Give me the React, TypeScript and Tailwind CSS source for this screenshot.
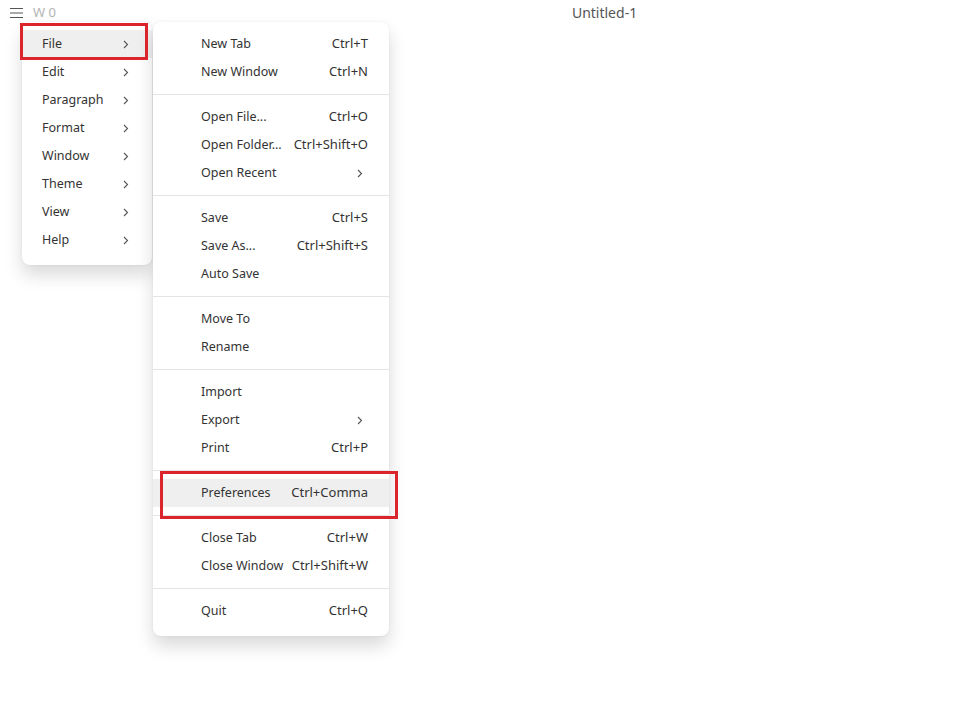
import React from 'react'

type Item = { label: string; shortcut?: string; sub?: boolean; active?: boolean }

const topMenu = ['File', 'Edit', 'Paragraph', 'Format', 'Window', 'Theme', 'View', 'Help']

const fileGroups: Item[][] = [
  [{ label: 'New Tab', shortcut: 'Ctrl+T' }, { label: 'New Window', shortcut: 'Ctrl+N' }],
  [
    { label: 'Open File...', shortcut: 'Ctrl+O' },
    { label: 'Open Folder...', shortcut: 'Ctrl+Shift+O' },
    { label: 'Open Recent', sub: true },
  ],
  [
    { label: 'Save', shortcut: 'Ctrl+S' },
    { label: 'Save As...', shortcut: 'Ctrl+Shift+S' },
    { label: 'Auto Save' },
  ],
  [{ label: 'Move To' }, { label: 'Rename' }],
  [{ label: 'Import' }, { label: 'Export', sub: true }, { label: 'Print', shortcut: 'Ctrl+P' }],
  [{ label: 'Preferences', shortcut: 'Ctrl+Comma', active: true }],
  [{ label: 'Close Tab', shortcut: 'Ctrl+W' }, { label: 'Close Window', shortcut: 'Ctrl+Shift+W' }],
  [{ label: 'Quit', shortcut: 'Ctrl+Q' }],
]

function Chevron() {
  return (
    <svg width="6" height="9" viewBox="0 0 6 9" fill="none" className="text-[#555]">
      <path d="M1 1l3.5 3.5L1 8" stroke="currentColor" strokeWidth="1.1" />
    </svg>
  )
}

export default function App() {
  return (
    <div
      className="relative w-[953px] h-[709px] bg-white overflow-hidden text-[12.5px] text-[#333]"
      style={{ fontFamily: '"Noto Sans", "Open Sans", sans-serif' }}
    >
      {/* title bar */}
      <div className="flex items-center h-[25px] pl-[10px]">
        <svg width="13" height="12" viewBox="0 0 13 12" className="text-[#555]">
          <path d="M0 1.5h13M0 6h13M0 10.5h13" stroke="currentColor" strokeWidth="1.1" />
        </svg>
        <span className="ml-[10px] text-[#b4b4b4] text-[13px]">W 0</span>
        <span className="ml-[516px] text-[14px] text-[#555]">Untitled-1</span>
      </div>

      {/* main menu */}
      <div className="absolute left-[22px] top-[22px] w-[130px] bg-white rounded-[8px] pt-2 pb-[11px] shadow-[0_10px_18px_rgba(0,0,0,0.15),0_0_3px_rgba(0,0,0,0.06)]">
        {topMenu.map((m, i) => (
          <div
            key={m}
            className={`flex items-center justify-between h-[28px] pl-[20px] pr-[23px] ${i === 0 ? 'bg-[#efefef]' : ''}`}
          >
            <span>{m}</span>
            <Chevron />
          </div>
        ))}
      </div>

      {/* file submenu */}
      <div className="absolute left-[153px] top-[22px] w-[236px] bg-white rounded-[8px] pt-2 pb-[11px] shadow-[0_10px_18px_rgba(0,0,0,0.15),0_0_3px_rgba(0,0,0,0.06)]">
        {fileGroups.map((group, gi) => (
          <div key={gi}>
            {gi > 0 && <div className="my-2 h-px bg-[#e4e4e4]" />}
            {group.map((it) => (
              <div
                key={it.label}
                className={`flex items-center justify-between h-[28px] pl-[48px] pr-[21px] ${it.active ? 'bg-[#efefef]' : ''}`}
              >
                <span>{it.label}</span>
                {it.shortcut && <span className="text-[13px]">{it.shortcut}</span>}
                {it.sub && (
                  <span className="mr-[5px]">
                    <Chevron />
                  </span>
                )}
              </div>
            ))}
          </div>
        ))}
      </div>

      {/* annotation boxes */}
      <div className="absolute left-[20px] top-[23px] w-[128px] h-[37px] border-[3px] border-[#d9252b]" />
      <div className="absolute left-[160px] top-[471px] w-[238px] h-[48px] border-[3px] border-[#d9252b]" />
    </div>
  )
}
